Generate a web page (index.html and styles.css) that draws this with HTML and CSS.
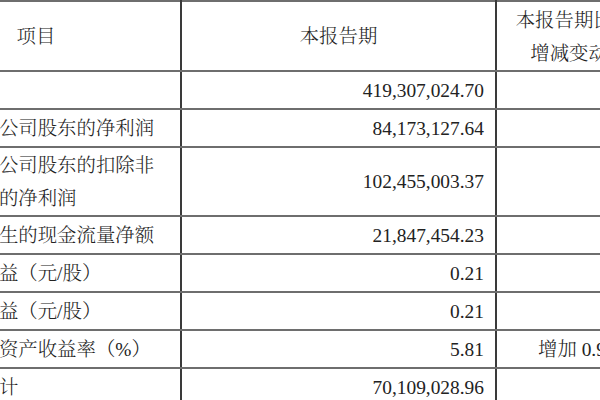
FILE: index.html
```html
<!DOCTYPE html>
<html lang="zh">
<head>
<meta charset="utf-8">
<title>主要会计数据和财务指标</title>
<link rel="stylesheet" href="styles.css">
</head>
<body>
<table class="fin">
  <colgroup>
    <col class="c-item">
    <col class="c-cur">
    <col class="c-chg">
  </colgroup>
  <tr class="head">
    <td class="center">项目</td>
    <td class="center">本报告期</td>
    <td class="center">本报告期比上年同期<br>增减变动幅度(%)</td>
  </tr>
  <tr>
    <td>营业收入</td>
    <td class="num">419,307,024.70</td>
    <td class="num"></td>
  </tr>
  <tr>
    <td>归属于上市公司股东的净利润</td>
    <td class="num">84,173,127.64</td>
    <td class="num"></td>
  </tr>
  <tr class="tall">
    <td>归属于上市公司股东的扣除非<br>经常性损益的净利润</td>
    <td class="num">102,455,003.37</td>
    <td class="num"></td>
  </tr>
  <tr>
    <td>经营活动产生的现金流量净额</td>
    <td class="num">21,847,454.23</td>
    <td class="num"></td>
  </tr>
  <tr>
    <td>基本每股收益（元/股）</td>
    <td class="num">0.21</td>
    <td class="num"></td>
  </tr>
  <tr>
    <td>稀释每股收益（元/股）</td>
    <td class="num">0.21</td>
    <td class="num"></td>
  </tr>
  <tr>
    <td>加权平均净资产收益率（%）</td>
    <td class="num">5.81</td>
    <td class="num">增加 0.95 个百分点</td>
  </tr>
  <tr>
    <td>研发投入合计</td>
    <td class="num">70,109,028.96</td>
    <td class="num"></td>
  </tr>
</table>
</body>
</html>
```

FILE: styles.css
```css
html, body {
  margin: 0;
  padding: 0;
  overflow: hidden;
  background: #ffffff;
}

.fin {
  margin-left: -110px;
  border-collapse: collapse;
  table-layout: fixed;
  width: 819px;
  font-family: "Liberation Serif", "Noto Serif CJK SC", "Noto Sans CJK SC", serif;
  font-size: 19.4px;
  font-weight: 300;
  color: #222222;
}

.c-item { width: 290px; }
.c-cur { width: 315px; }
.c-chg { width: 214px; }

.fin td {
  height: 34px;
  padding: 2px 11px 0 10px;
  line-height: 32.5px;
  vertical-align: middle;
  white-space: nowrap;
  border-top: 2px solid #6e6e6e;
  border-bottom: 2px solid #6e6e6e;
  border-left: 2px solid #3a3a3a;
  border-right: 2px solid #3a3a3a;
  box-sizing: content-box;
}

.fin .head td {
  height: 63px;
}

.fin .tall td {
  height: 63px;
}

.fin td.center {
  text-align: center;
  padding: 3px 12px 0 12px;
}

.fin .head td.center {
  height: 61px;
}

.fin td.num {
  text-align: right;
  padding-left: 11px;
}
```
